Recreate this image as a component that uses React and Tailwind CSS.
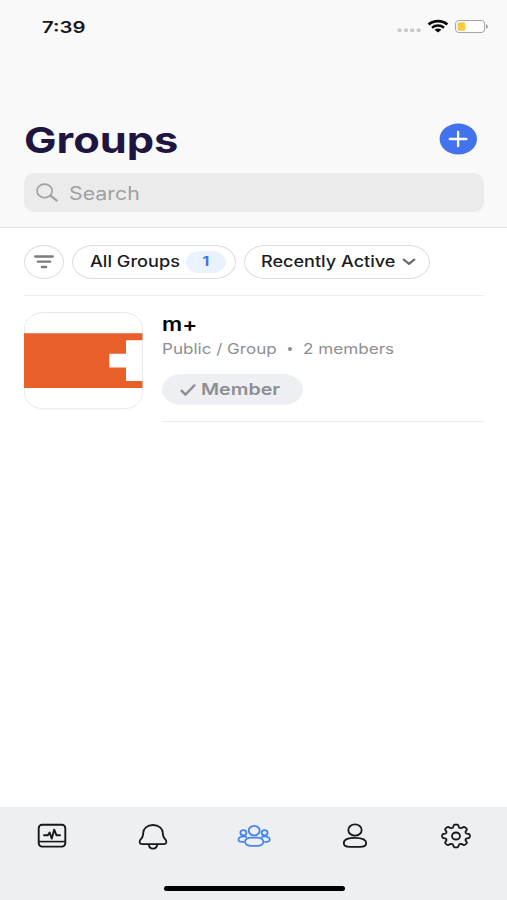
const tabs = [
  { id: 'activity', icon: ActivityIcon },
  { id: 'alerts', icon: BellIcon },
  { id: 'groups', icon: GroupsIcon },
  { id: 'profile', icon: PersonIcon },
  { id: 'settings', icon: GearIcon },
];

// eight rounded teeth around the hub
const gearPath =
  Array.from({ length: 128 }, (_, i) => {
    const a = (i / 128) * Math.PI * 2;
    const r = 0.87 + 0.13 * Math.tanh(1.9 * (Math.cos(8 * a) + 0.2));
    const x = 15 + 13.9 * r * Math.cos(a);
    const y = 13 + 11.5 * r * Math.sin(a);
    return `${i ? 'L' : 'M'}${x.toFixed(2)} ${y.toFixed(2)}`;
  }).join('') + 'Z';

function ActivityIcon() {
  return (
    <svg width="30" height="26" viewBox="0 0 30 26" fill="none" stroke="#17181a">
      <rect x="1.7" y="1.8" width="26.6" height="21.8" rx="3.4" strokeWidth="1.9" />
      <path d="M2 18.6H28" strokeWidth="1.6" />
      <path
        d="M7 12.2H10.8L12.6 9.6L14.8 15.6L17.2 6.6L19.4 12.2H23"
        strokeWidth="1.9"
        strokeLinejoin="round"
        strokeLinecap="round"
      />
    </svg>
  );
}

function BellIcon() {
  return (
    <svg width="30" height="28" viewBox="0 0 30 28" fill="none" stroke="#17181a" strokeWidth="1.8">
      <path d="M15 3C9 3 5.3 6.6 5.2 11C5.1 14.6 4.8 15.6 3 17C0.5 19.2 1.3 22.2 4.4 22.2H25.6C28.7 22.2 29.5 19.2 27 17C25.2 15.6 24.9 14.6 24.8 11C24.7 6.6 21 3 15 3Z" />
      <path d="M10.8 22.4C11 25 12.8 26.6 15 26.6C17.2 26.6 19 25 19.2 22.4" />
    </svg>
  );
}

function GroupsIcon() {
  return (
    <svg width="34" height="24" viewBox="0 0 34 24" fill="none" stroke="#4585ea" strokeWidth="1.8">
      <ellipse cx="17.2" cy="6.6" rx="5.5" ry="4.8" />
      <rect x="8" y="13.6" width="18.4" height="8.3" rx="6" ry="4.1" />
      <ellipse cx="6.4" cy="8.8" rx="3" ry="2.6" />
      <ellipse cx="27.6" cy="8.8" rx="3" ry="2.6" />
      <path d="M9.8 13.1C8 12.4 4.8 12.4 3 13.3C1.3 14.2 1 16.2 2.1 17.2C2.9 18 4.8 17.8 7 17.8" />
      <path d="M24.4 13.1C26.2 12.4 29.4 12.4 31.2 13.3C32.9 14.2 33.2 16.2 32.1 17.2C31.3 18 29.4 17.8 27.2 17.8" />
    </svg>
  );
}

function PersonIcon() {
  return (
    <svg width="26" height="26" viewBox="0 0 26 26" fill="none" stroke="#17181a" strokeWidth="1.8">
      <ellipse cx="13" cy="7" rx="6.7" ry="5.6" />
      <path d="M13 14.8C5.6 14.8 1.8 16.6 1.8 20.2C1.8 23 4 23.8 8 23.8H18C22 23.8 24.2 23 24.2 20.2C24.2 16.6 20.4 14.8 13 14.8Z" />
    </svg>
  );
}

function GearIcon() {
  return (
    <svg width="30" height="26" viewBox="0 0 30 26" fill="none" stroke="#17181a" strokeWidth="1.8">
      <path d={gearPath} strokeLinejoin="round" />
      <ellipse cx="15" cy="13" rx="4" ry="3.5" />
    </svg>
  );
}

function StatusBar() {
  return (
    <div className="flex h-[54px] items-start justify-between pl-[42px] pr-[18px] pt-[17px]">
      <span className="origin-left scale-x-[1.27] text-base leading-5 font-semibold text-[#17181a]">
        7:39
      </span>
      <div className="flex items-start">
        <svg width="24" height="20" viewBox="0 0 24 20" fill="#c9c9ca" className="mr-1.5">
          <rect x="0.6" y="11.6" width="4" height="3.4" rx="1.2" />
          <rect x="7" y="11.6" width="4" height="3.4" rx="1.2" />
          <rect x="13.2" y="11.6" width="4" height="3.4" rx="1.2" />
          <rect x="19.6" y="11.6" width="4" height="3.4" rx="1.2" />
        </svg>
        <svg width="22" height="20" viewBox="0 0 22 20" fill="none" stroke="#0a0a0a">
          <path d="M1.6 7.5C6.8 3 15.2 3 20.4 7.5" strokeWidth="2.8" />
          <path d="M5 10.7C8.4 7.8 13.6 7.8 17 10.7" strokeWidth="2.5" />
          <path d="M7.6 12.7C9.5 11.1 12.5 11.1 14.4 12.7L11 15.5Z" fill="#0a0a0a" stroke="none" />
        </svg>
        <svg width="34" height="20" viewBox="0 0 34 20" className="ml-1.5">
          <rect x="0.6" y="3.5" width="29" height="12" rx="3.6" fill="#fff" stroke="#a4a4a6" strokeWidth="1.1" />
          <rect x="2.6" y="5.2" width="7.8" height="8.6" rx="1.6" fill="#f7c944" />
          <path d="M31 7.2C33.6 8 33.6 11 31 11.8Z" fill="#a4a4a6" />
        </svg>
      </div>
    </div>
  );
}

function Header() {
  return (
    <header className="h-[228px] border-b border-[#e2e2e3] bg-[#f9f9f9]">
      <StatusBar />
      <div className="mt-[65px] flex h-10 items-center justify-between pl-6 pr-[30px]">
        <h1 className="origin-left scale-x-[1.205] pt-px text-4xl font-bold text-[#1e1540]">Groups</h1>
        <button>
          <svg width="38" height="32" viewBox="0 0 38 32">
            <ellipse cx="19.3" cy="16" rx="18.7" ry="15.5" fill="#4272ec" />
            <path d="M10.8 16H27.4M19.1 8.8V23.2" stroke="#fff" strokeWidth="2.3" strokeLinecap="round" />
          </svg>
        </button>
      </div>
      <div className="mr-[23px] ml-6 mt-3.5 flex h-[39px] items-center rounded-[10px] bg-[#ebebeb] pl-3">
        <svg width="23" height="19" viewBox="0 0 23 19" fill="none" stroke="#a0a0a2" strokeWidth="1.6">
          <ellipse cx="8.6" cy="7.9" rx="7.6" ry="6.8" />
          <path d="M14.4 12.6L20.8 17.6" strokeWidth="2" strokeLinecap="round" />
        </svg>
        <span className="ml-2.5 origin-left scale-x-[1.185] pt-0.5 text-lg text-[#a0a0a2]">Search</span>
      </div>
    </header>
  );
}

function Filters() {
  return (
    <div className="mr-[23px] ml-6 flex h-[68px] items-center gap-2 border-b border-[#ececed] text-[15.5px] font-medium text-[#1b1c1e]">
      <button className="flex h-[34px] w-10 items-center justify-center rounded-[50%] border border-[#dddddf]">
        <svg width="20" height="14" viewBox="0 0 20 14" stroke="#7b7b7d" strokeWidth="2.3" strokeLinecap="round">
          <path d="M1.2 1.5H18.8M3.8 6.7H16.2M7.8 12H12.2" />
        </svg>
      </button>
      <button className="flex h-[34px] w-[164px] items-center justify-between rounded-[21px/17px] border border-[#dddddf] pl-[17px] pr-[9px]">
        <span className="origin-left scale-x-[1.17] whitespace-nowrap">All Groups</span>
        <span className="flex h-[22px] w-10 items-center justify-center rounded-[14px/11px] bg-[#e9f2fe] text-[13px] font-bold text-[#3f74ea]">
          <span className="scale-x-[1.2]">1</span>
        </span>
      </button>
      <button className="flex h-[34px] w-[186px] items-center justify-between rounded-[21px/17px] border border-[#dddddf] pl-4 pr-[13px]">
        <span className="origin-left scale-x-[1.165] whitespace-nowrap">Recently Active</span>
        <svg width="14" height="8" viewBox="0 0 14 8" fill="none" stroke="#6d6d6f" strokeWidth="2.3">
          <path d="M1.8 1.6L7 5.8L12.2 1.6" strokeLinecap="round" strokeLinejoin="round" />
        </svg>
      </button>
    </div>
  );
}

function GroupRow() {
  return (
    <div className="mr-[23px] ml-6 mt-4 flex">
      <svg width="119" height="98" viewBox="0 0 119 98">
        <rect x="0.5" y="0.5" width="118" height="96.3" rx="19" ry="16" fill="#fff" stroke="#e9e9eb" />
        <path d="M0 21.3H118.5V28.2H102V41.8H85.3V55.5H102V69H118.5V76H0Z" fill="#e85f2a" />
      </svg>
      <div className="ml-[19px] h-[110px] flex-1 border-b border-[#ececed]">
        <h2 className="w-fit origin-left scale-x-[1.18] pt-px text-[19px] leading-6 font-semibold text-black">m+</h2>
        <div className="flex h-6 items-center text-[14.5px] text-[#8e8e93]">
          <span className="w-[126px]">
            <span className="inline-block origin-left scale-x-[1.175] whitespace-nowrap">Public / Group</span>
          </span>
          <span className="size-[3.5px] rounded-full bg-[#8e8e93]" />
          <span className="ml-[11px] origin-left scale-x-[1.18] whitespace-nowrap">2 members</span>
        </div>
        <button className="mt-[13px] flex h-[31px] w-[141px] items-center rounded-[20px/16px] bg-[#edeff2] pl-[18px] text-[#8e8f92]">
          <svg width="17" height="14" viewBox="0 0 17 14" fill="none" stroke="currentColor" strokeWidth="2.3">
            <path d="M1.6 7.6L5.4 11.6L14.4 2.4" strokeLinecap="round" strokeLinejoin="round" />
          </svg>
          <span className="ml-1 origin-left scale-x-[1.19] text-[16.5px] font-semibold">Member</span>
        </button>
      </div>
    </div>
  );
}

function TabBar() {
  return (
    <nav className="flex h-[93px] flex-col justify-between bg-[#edeff2] pb-[9px]">
      <div className="mt-[15px] grid grid-cols-5 pl-px">
        {tabs.map(({ id, icon: Icon }) => (
          <button key={id} className="flex h-7 items-center justify-center">
            <Icon />
          </button>
        ))}
      </div>
      <div className="ml-[164px] h-[5px] w-[181px] rounded-full bg-black" />
    </nav>
  );
}

export default function App() {
  return (
    <div className="h-[900px] w-[507px] overflow-hidden bg-black font-['Inter',sans-serif]">
      <div className="flex h-full flex-col overflow-hidden rounded-t-[14px/11px] bg-white">
        <Header />
        <main className="flex-1">
          <Filters />
          <GroupRow />
        </main>
        <TabBar />
      </div>
    </div>
  );
}
